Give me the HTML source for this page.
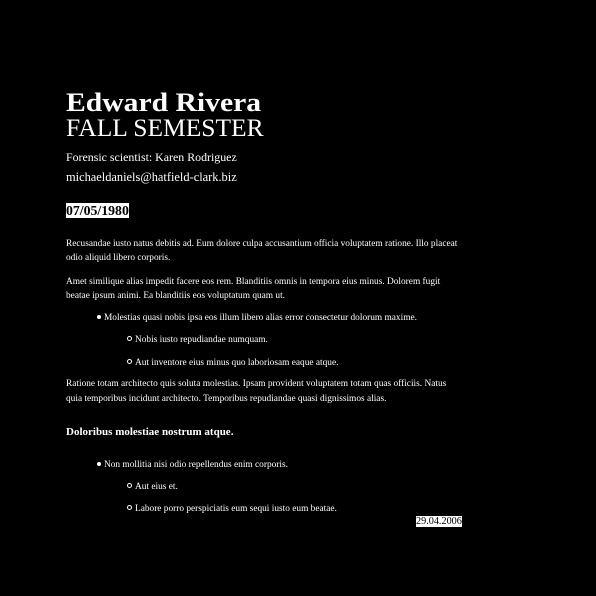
<!DOCTYPE html>
<html><head><meta charset="utf-8"><style>
html,body{margin:0;padding:0;background:#000;width:596px;height:596px;overflow:hidden}
body{position:relative;font-family:"Liberation Serif",serif;color:#fff}
.l{position:absolute;white-space:nowrap;line-height:16px}
.p{font-size:9.35px}
.b{font-weight:bold}
.hl{background:#fff;color:#000}
.dot{display:inline-block;width:4px;height:4px;border-radius:50%;background:#fff;margin-right:3px;vertical-align:1px}
.circ{display:inline-block;width:3px;height:3px;border-radius:50%;border:1px solid #fff;margin-right:3px;vertical-align:1px}
</style></head><body>
<div class="l b" style="left:66px;top:88px;font-size:26px;line-height:30px;transform:scaleX(1.14);transform-origin:0 0">Edward Rivera</div>
<div class="l" style="left:66px;top:113px;font-size:25.5px;line-height:30px">FALL SEMESTER</div>
<div class="l" style="left:66px;top:149px;font-size:11.9px">Forensic scientist: Karen Rodriguez</div>
<div class="l" style="left:66px;top:169px;font-size:12.4px">michaeldaniels@hatfield-clark.biz</div>
<div class="l b" style="left:66px;top:203px;font-size:13.8px;line-height:15px"><span class="hl">07/05/1980</span></div>
<div class="l p" style="left:66px;top:236px">Recusandae iusto natus debitis ad. Eum dolore culpa accusantium officia voluptatem ratione. Illo placeat</div>
<div class="l p" style="left:66px;top:250px">odio aliquid libero corporis.</div>
<div class="l p" style="left:66px;top:274px">Amet similique alias impedit facere eos rem. Blanditiis omnis in tempora eius minus. Dolorem fugit</div>
<div class="l p" style="left:66px;top:288px">beatae ipsum animi. Ea blanditiis eos voluptatum quam ut.</div>
<div class="l p" style="left:97px;top:310px"><span class="dot"></span>Molestias quasi nobis ipsa eos illum libero alias error consectetur dolorum maxime.</div>
<div class="l p" style="left:127px;top:332px"><span class="circ"></span>Nobis iusto repudiandae numquam.</div>
<div class="l p" style="left:127px;top:355px"><span class="circ"></span>Aut inventore eius minus quo laboriosam eaque atque.</div>
<div class="l p" style="left:66px;top:376px">Ratione totam architecto quis soluta molestias. Ipsam provident voluptatem totam quas officiis. Natus</div>
<div class="l p" style="left:66px;top:391px">quia temporibus incidunt architecto. Temporibus repudiandae quasi dignissimos alias.</div>
<div class="l b" style="left:66px;top:424px;font-size:11px">Doloribus molestiae nostrum atque.</div>
<div class="l p" style="left:97px;top:457px"><span class="dot"></span>Non mollitia nisi odio repellendus enim corporis.</div>
<div class="l p" style="left:127px;top:479px"><span class="circ"></span>Aut eius et.</div>
<div class="l p" style="left:127px;top:501px"><span class="circ"></span>Labore porro perspiciatis eum sequi iusto eum beatae.</div>
<div class="l p" style="left:416px;top:515px;line-height:13px;font-size:10.2px"><span class="hl">29.04.2006</span></div>
</body></html>
